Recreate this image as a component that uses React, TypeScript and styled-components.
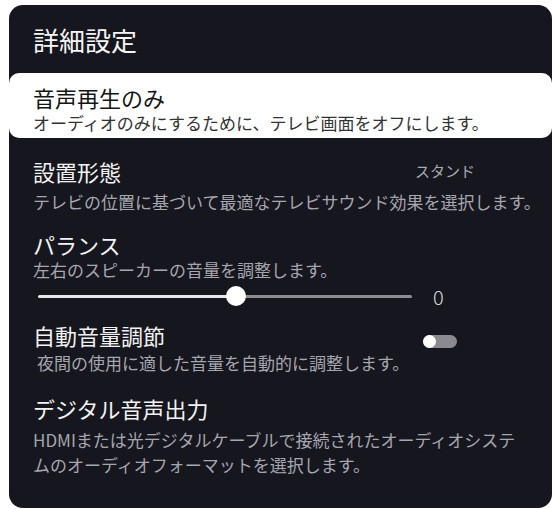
import React from "react";
import styled, { createGlobalStyle } from "styled-components";

const GlobalStyle = createGlobalStyle`
  html, body {
    margin: 0;
    padding: 0;
    background: #ffffff;
  }
  body {
    font-family: "Noto Sans CJK JP", "Noto Sans", sans-serif;
  }
`;

const Panel = styled.div`
  margin: 5px 0 0 9px;
  width: 543px;
  height: 503px;
  background: #16161f;
  border-radius: 14px;
  overflow: hidden;
  color: #f2f2f2;
  display: flex;
  flex-direction: column;
`;

const Header = styled.h1`
  margin: 0;
  height: 68px;
  padding: 0 24px;
  display: flex;
  align-items: center;
  font-size: 26px;
  font-weight: 400;
  color: #f5f5f5;
`;

const Item = styled.div<{ $selected?: boolean; $gap?: number }>`
  padding: ${(p) => (p.$selected ? "10px 10px 3px 24px" : "0 8px 0 24px")};
  margin-top: ${(p) => p.$gap ?? 0}px;
  background: ${(p) => (p.$selected ? "#ffffff" : "transparent")};
  border-radius: ${(p) => (p.$selected ? "10px" : "0")};
  color: ${(p) => (p.$selected ? "#151515" : "#f2f2f2")};
`;

const TitleRow = styled.div`
  display: flex;
  align-items: flex-start;
`;

const Title = styled.div`
  font-size: 22px;
  line-height: 28px;
  flex: 1;
`;

const Value = styled.div`
  width: 129px;
  font-size: 15px;
  line-height: 28px;
  color: #a9a9b0;
`;

const Desc = styled.div<{ $selected?: boolean; $indent?: number; $top?: number; $lh?: number }>`
  font-size: 17px;
  line-height: ${(p) => p.$lh ?? 24}px;
  margin-top: ${(p) => p.$top ?? 0}px;
  padding-left: ${(p) => p.$indent ?? 0}px;
  color: ${(p) => (p.$selected ? "#333333" : "#a6a6ae")};
  white-space: pre-line;
`;

const SliderRow = styled.div`
  display: flex;
  align-items: center;
  height: 28px;
  padding-left: 5px;
`;

const Track = styled.div`
  position: relative;
  width: 374px;
  height: 3px;
  border-radius: 2px;
`;

const Knob = styled.div`
  position: absolute;
  top: 50%;
  width: 20px;
  height: 20px;
  margin: -10px 0 0 -10px;
  border-radius: 50%;
  background: #ffffff;
`;

const SliderValue = styled.div`
  margin-left: 21px;
  font-size: 20px;
  font-weight: 300;
  color: #d8d8dc;
`;

const Toggle = styled.div<{ $on?: boolean }>`
  position: relative;
  width: 34px;
  height: 13px;
  margin: 14px 87px 0 0;
  border-radius: 7px;
  background: ${(p) => (p.$on ? "#ffffff" : "#8a8a90")};

  &::after {
    content: "";
    position: absolute;
    top: 0;
    left: ${(p) => (p.$on ? "21px" : "0")};
    width: 13px;
    height: 13px;
    border-radius: 50%;
    background: #ffffff;
  }
`;

const Slider = ({ value, percent }: { value: number; percent: number }) => (
  <SliderRow>
    <Track
      style={{
        background: `linear-gradient(to right, #e8e8ea ${percent}%, #8c8c92 ${percent}%)`,
      }}
    >
      <Knob style={{ left: `${percent}%` }} />
    </Track>
    <SliderValue>{value}</SliderValue>
  </SliderRow>
);

export default function App() {
  return (
    <>
      <GlobalStyle />
      <Panel>
        <Header>詳細設定</Header>

        <Item $selected>
          <Title>音声再生のみ</Title>
          <Desc $selected>オーディオのみにするために、テレビ画面をオフにします。</Desc>
        </Item>

        <Item $gap={19}>
          <TitleRow>
            <Title>設置形態</Title>
            <Value>スタンド</Value>
          </TitleRow>
          <Desc $top={5}>テレビの位置に基づいて最適なテレビサウンド効果を選択します。</Desc>
        </Item>

        <Item $gap={16}>
          <Title>パランス</Title>
          <Desc>左右のスピーカーの音量を調整します。</Desc>
          <Slider value={0} percent={53} />
        </Item>

        <Item $gap={11}>
          <TitleRow>
            <Title>自動音量調節</Title>
            <Toggle />
          </TitleRow>
          <Desc $indent={4} $top={2}>夜間の使用に適した音量を自動的に調整します。</Desc>
        </Item>

        <Item $gap={19}>
          <Title>デジタル音声出力</Title>
          <Desc $top={5} $lh={25}>
            {"HDMIまたは光デジタルケーブルで接続されたオーディオシステ\nムのオーディオフォーマットを選択します。"}
          </Desc>
        </Item>
      </Panel>
    </>
  );
}
